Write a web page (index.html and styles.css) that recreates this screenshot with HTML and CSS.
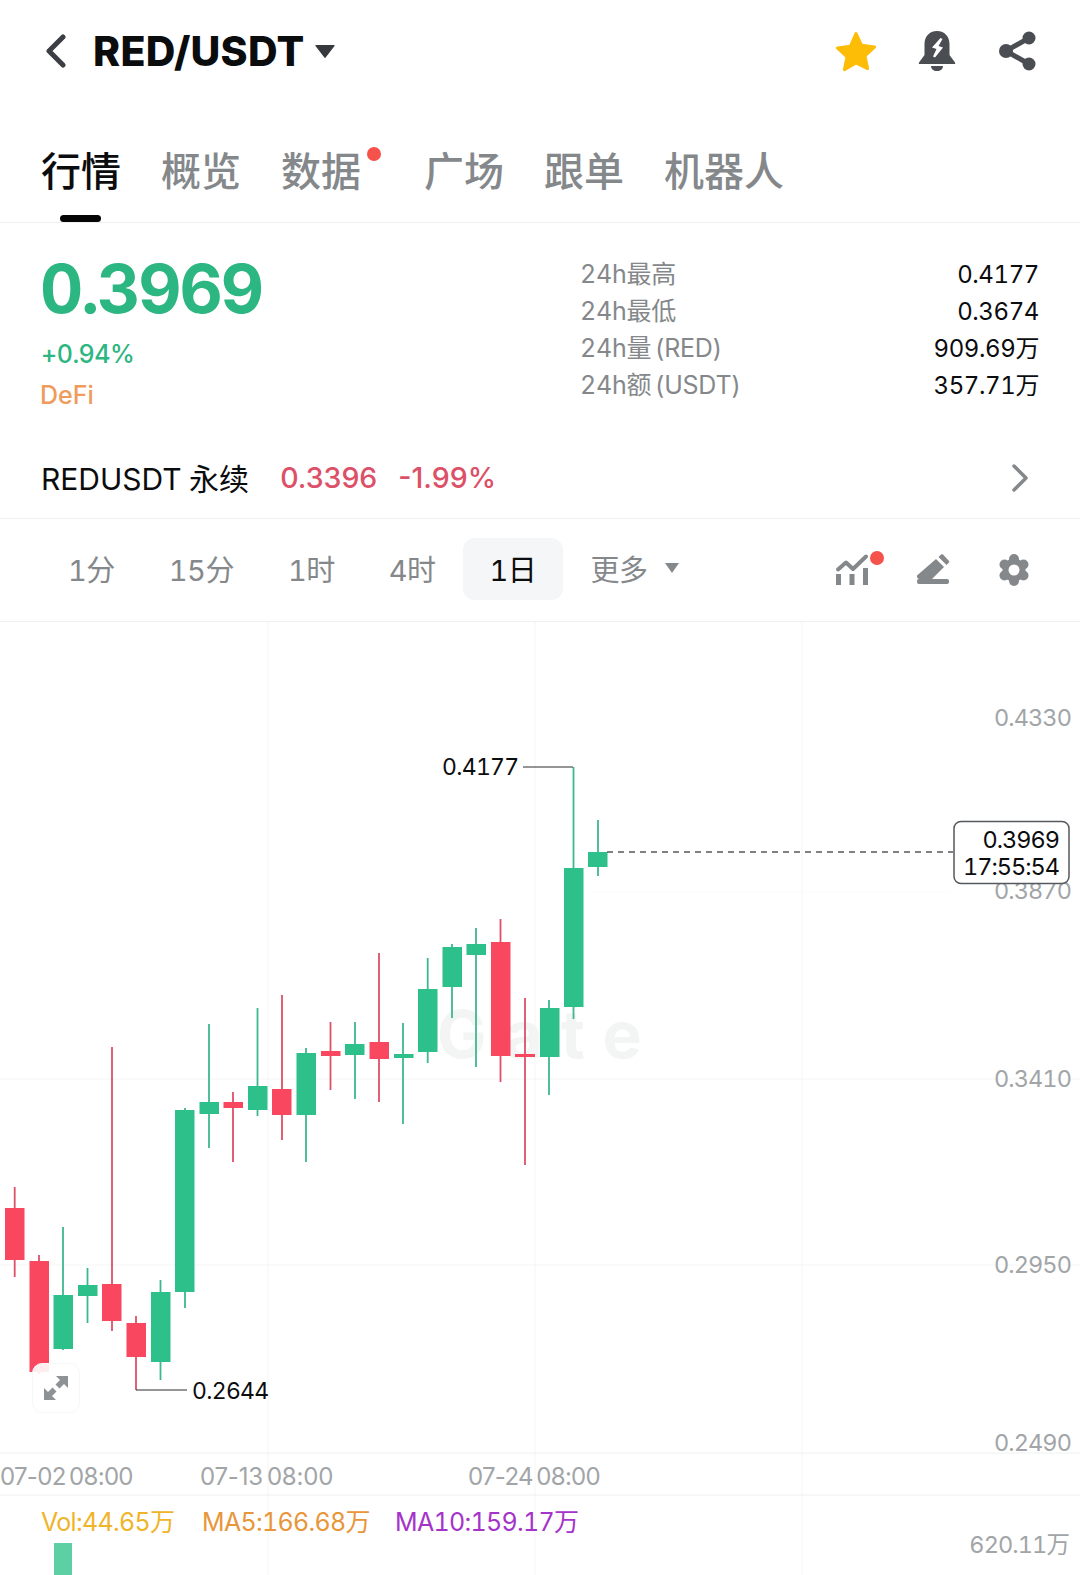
FILE: index.html
```html
<!DOCTYPE html>
<html lang="zh-CN">
<head>
    <meta charset="UTF-8">
    <title>RED/USDT</title>
    <meta name="viewport" content="width=device-width,initial-scale=1">
    <link rel="stylesheet" href="styles.css">
</head>
<body>
    <div class="header">
        <svg class="back" viewBox="0 0 22 34"><path d="M18 3L4 17l14 14"/></svg>
        <div class="pair">RED/USDT</div>
        <svg class="pair-caret" viewBox="0 0 20 14"><path d="M1.500 1.500h17l-8.500 11z"/></svg>
        <div class="header-icons">
            <svg viewBox="0 0 44 44"><path class="star" d="M22 4.500l5.600 11.800 13 1.600-9.600 8.900 2.600 12.800L22 33.900 10.400 40.600 13 27.800l-9.600-8.900 13-1.600z"/></svg>
            <svg viewBox="0 0 44 44">
                <path class="dark" d="M22 2c-8 0-12.500 6-12.500 13v11L4 33.500c-.6 1 0 1.500 1 1.500h34c1 0 1.600-.5 1-1.500L34.500 26V15C34.500 8 30 2 22 2z"/>
                <path class="dark" d="M16 37h12c0 3-2.500 5-6 5s-6-2-6-5z"/>
                <path class="bolt" d="M25.500 9l-8.500 9.500 4.500 1.500-3.500 7.500 2 1 8-10-4.500-1.500 4-7z"/>
            </svg>
            <svg viewBox="0 0 44 44">
                <path class="share-line" d="M33 9L10 22l23 13"/>
                <circle class="dark" cx="33" cy="9" r="6.500"/>
                <circle class="dark" cx="10" cy="22" r="7"/>
                <circle class="dark" cx="33" cy="35" r="6.500"/>
            </svg>
        </div>
    </div>

    <div class="tabs">
        <div class="tab active">行情</div>
        <div class="tab">概览</div>
        <div class="tab has-dot">数据</div>
        <div class="tab">广场</div>
        <div class="tab">跟单</div>
        <div class="tab">机器人</div>
    </div>

    <div class="quote">
        <div class="quote-left">
            <div class="price">0.3969</div>
            <div class="change">+0.94%</div>
            <div class="sector">DeFi</div>
        </div>
        <div class="stats">
            <div class="stat"><span>24h最高</span><b>0.4177</b></div>
            <div class="stat"><span>24h最低</span><b>0.3674</b></div>
            <div class="stat"><span>24h量 (RED)</span><b>909.69万</b></div>
            <div class="stat"><span>24h额 (USDT)</span><b>357.71万</b></div>
        </div>
    </div>

    <div class="perp">
        <span class="perp-name">REDUSDT 永续</span>
        <span class="perp-price">0.3396</span>
        <span class="perp-pct">-1.99%</span>
        <svg class="perp-arrow" viewBox="0 0 16 28"><path d="M2 2l12 12L2 26"/></svg>
    </div>

    <div class="intervals">
        <div class="interval">1分</div>
        <div class="interval">15分</div>
        <div class="interval">1时</div>
        <div class="interval">4时</div>
        <div class="interval active">1日</div>
        <div class="interval">更多<svg class="more-caret" viewBox="0 0 14 10"><path d="M0 0h14L7 10z"/></svg></div>
        <div class="tools">
            <svg viewBox="0 0 32 32">
                <path class="tool-line" d="M2 15.500l8-7 7 6.500L30 2.500"/>
                <path class="tool-bar" d="M2.500 20v11M16 20v11M29.500 14v17"/>
                <circle class="red-dot" cx="41" cy="4" r="7"/>
            </svg>
            <svg viewBox="0 0 32 32">
                <path class="tool" d="M0 21.500L19 5l8 8L15 25H2.500C1 25 0 24 0 22.500z"/>
                <path class="tool" d="M24 .5L21.500 3l8 8L32 8.500c.5-.5.5-1 0-1.500L26 .5c-.5-.5-1.500-.5-2 0z"/>
                <rect class="tool" x="0" y="25" width="32" height="5" rx="2"/>
            </svg>
            <svg viewBox="0 0 32 32">
                <circle class="tool" cx="16" cy="16" r="11.500"/>
                <circle class="tool" cx="16" cy="5" r="5"/>
                <circle class="tool" cx="16" cy="27" r="5"/>
                <circle class="tool" cx="6.500" cy="10.500" r="5"/>
                <circle class="tool" cx="25.500" cy="10.500" r="5"/>
                <circle class="tool" cx="6.500" cy="21.500" r="5"/>
                <circle class="tool" cx="25.500" cy="21.500" r="5"/>
                <circle class="hole" cx="16" cy="16" r="5.500"/>
            </svg>
        </div>
    </div>

    <div class="chart">
        <!-- viewBox starts at 622 so the numbers below are page y values -->
        <svg class="plot" viewBox="0 622 1080 953">
            <g class="grid">
                <path d="M268 622V1575M535 622V1575M802 622V1575"/>
                <path d="M0 1079H1080M0 1265H1080"/>
                <path class="grid-faint" d="M590 892H950"/>
                <path class="grid-dark" d="M0 1453H1080M0 1495H1080"/>
            </g>
            <text class="watermark" x="437" y="1058">Gate</text>

            <g class="dn"><line x1="14.700" y1="1187" x2="14.700" y2="1277"/><rect x="5" y="1208" width="19.500" height="52"/></g>
            <g class="dn"><line x1="39" y1="1255" x2="39" y2="1374"/><rect x="29.500" y="1261" width="19.500" height="111"/></g>
            <g class="up"><line x1="63" y1="1227" x2="63" y2="1350"/><rect x="53.500" y="1295" width="19.500" height="54"/></g>
            <g class="up"><line x1="87.500" y1="1268" x2="87.500" y2="1323"/><rect x="78" y="1285" width="19.500" height="11"/></g>
            <g class="dn"><line x1="112" y1="1047" x2="112" y2="1331"/><rect x="102" y="1284" width="19.500" height="37"/></g>
            <g class="dn"><line x1="136" y1="1316" x2="136" y2="1390"/><rect x="126.500" y="1323" width="19.500" height="34"/></g>
            <g class="up"><line x1="160.500" y1="1280" x2="160.500" y2="1380"/><rect x="151" y="1292" width="19.500" height="70"/></g>
            <g class="up"><line x1="185" y1="1108" x2="185" y2="1308"/><rect x="175" y="1110" width="19.500" height="182"/></g>
            <g class="up"><line x1="209" y1="1024" x2="209" y2="1148"/><rect x="199.500" y="1102" width="19.500" height="12"/></g>
            <g class="dn"><line x1="233" y1="1092" x2="233" y2="1162"/><rect x="223.500" y="1102" width="19.500" height="6"/></g>
            <g class="up"><line x1="257.500" y1="1008" x2="257.500" y2="1116"/><rect x="248" y="1086" width="19.500" height="24"/></g>
            <g class="dn"><line x1="282" y1="995" x2="282" y2="1140"/><rect x="272" y="1089" width="19.500" height="26"/></g>
            <g class="up"><line x1="306" y1="1048" x2="306" y2="1162"/><rect x="296.500" y="1053" width="19.500" height="62"/></g>
            <g class="dn"><line x1="330.500" y1="1022" x2="330.500" y2="1090"/><rect x="321" y="1051" width="19.500" height="5"/></g>
            <g class="up"><line x1="355" y1="1022" x2="355" y2="1099"/><rect x="345" y="1044" width="19.500" height="11"/></g>
            <g class="dn"><line x1="379" y1="953" x2="379" y2="1102"/><rect x="369.500" y="1042" width="19.500" height="17"/></g>
            <g class="up"><line x1="403" y1="1023" x2="403" y2="1124"/><rect x="394" y="1054" width="19.500" height="4"/></g>
            <g class="up"><line x1="427.700" y1="958" x2="427.700" y2="1063"/><rect x="418" y="989" width="19.500" height="63"/></g>
            <g class="up"><line x1="452" y1="944" x2="452" y2="1018"/><rect x="442.500" y="947" width="19.500" height="40"/></g>
            <g class="up"><line x1="476" y1="928" x2="476" y2="1067"/><rect x="466.500" y="944" width="19.500" height="11"/></g>
            <g class="dn"><line x1="500.500" y1="919" x2="500.500" y2="1082"/><rect x="491" y="942" width="19.500" height="114"/></g>
            <g class="dn"><line x1="525" y1="998" x2="525" y2="1165"/><rect x="515" y="1054" width="20" height="3"/></g>
            <g class="up"><line x1="549" y1="1000" x2="549" y2="1095"/><rect x="540" y="1008" width="19.500" height="49"/></g>
            <g class="up"><line x1="573.500" y1="767" x2="573.500" y2="1019"/><rect x="564" y="868" width="19.500" height="139"/></g>
            <g class="up"><line x1="598" y1="820" x2="598" y2="876"/><rect x="588" y="852" width="19.500" height="15"/></g>

            <path class="leader" d="M523 767H573M136 1390H187"/>
            <text class="mark" x="442" y="775">0.4177</text>
            <text class="mark" x="192" y="1399">0.2644</text>
            <path class="last-line" d="M607 852H953"/>

            <g class="axis">
                <text x="1071" y="726">0.4330</text>
                <text x="1071" y="899">0.3870</text>
                <text x="1071" y="1087">0.3410</text>
                <text x="1071" y="1273">0.2950</text>
                <text x="1071" y="1451">0.2490</text>
                <text x="1069" y="1553">620.11万</text>
            </g>

            <rect class="tag" x="954" y="821.500" width="115" height="62" rx="7"/>
            <text class="tag-text" x="1059" y="848">0.3969</text>
            <text class="tag-text" x="1059" y="875">17:55:54</text>

            <g class="times">
                <text x="0" y="1485">07-02 08:00</text>
                <text class="wide" x="200" y="1485">07-13 08:00</text>
                <text x="468" y="1485">07-24 08:00</text>
            </g>

            <text class="legend vol" x="41" y="1531">Vol:44.65万</text>
            <text class="legend ma5" x="202" y="1531">MA5:166.68万</text>
            <text class="legend ma10" x="395" y="1531">MA10:159.17万</text>
            <rect class="vol-bar" x="54" y="1543" width="18" height="32"/>
        </svg>
        <div class="expand">
            <svg viewBox="0 0 24 24"><path d="M12 0h12v12l-4-4-4.500 4.500-4-4L16 4zM0 24V12l4 4 4.500-4.500 4 4L8 20l4 4z"/></svg>
        </div>
    </div>
</body>
</html>
```
FILE: styles.css
```css
html,body{
    margin:0;
    padding:0;
    background:#fff;
}
body{
    width:1080px;
    height:1575px;
    overflow:hidden;
    font-family:Inter,"Noto Sans CJK SC",sans-serif;
    font-variant-numeric:tabular-nums;
    color:#0b0c0e;
}
.header{
    display:flex;
    align-items:center;
    height:102px;
    padding:0 40px 0 45px;
}
.back{
    width:22px;
    height:34px;
    margin-right:26px;
}
.back path{
    fill:none;
    stroke:#3b3e42;
    stroke-width:5;
    stroke-linecap:round;
    stroke-linejoin:round;
}
.pair{
    font-size:41px;
    font-weight:800;
    letter-spacing:.25px;
}
.pair-caret{
    width:22px;
    height:15px;
    margin-left:10px;
}
.pair-caret path{
    fill:#36393d;
    stroke:#36393d;
    stroke-width:1;
    stroke-linejoin:round;
}
.header-icons{
    display:flex;
    gap:37px;
    margin-left:auto;
}
.header-icons svg{
    width:44px;
    height:44px;
}
.star{
    fill:#fdbc05;
    stroke:#fdbc05;
    stroke-width:3;
    stroke-linejoin:round;
}
.dark{
    fill:#4a4d52;
}
.bolt{
    fill:#fff;
}
.share-line{
    fill:none;
    stroke:#4a4d52;
    stroke-width:5;
}

.tabs{
    display:flex;
    gap:40px;
    height:121px;
    padding-left:41px;
    box-sizing:border-box;
    border-bottom:1px solid #eff0f1;
    font-size:40px;
    font-weight:500;
    color:#85888b;
}
.tab{
    position:relative;
    line-height:140px;
    height:120px;
}
.tab.active{
    color:#0b0c0e;
}
.tab.active:after{
    content:"";
    position:absolute;
    left:19px;
    bottom:0;
    width:41px;
    height:7px;
    border-radius:4px;
    background:#050505;
}
.tab.has-dot{
    margin-right:23px;
}
.tab.has-dot:after{
    content:"";
    position:absolute;
    right:-20px;
    top:45px;
    width:14px;
    height:14px;
    border-radius:50%;
    background:#f4524a;
}

.quote{
    display:flex;
    justify-content:space-between;
    height:216px;
    padding:0 41px;
    box-sizing:border-box;
}
.price{
    margin:31px 0 0 -1px;
    line-height:70px;
    font-size:67px;
    font-weight:700;
    letter-spacing:-2.100px;
    color:#2cb681;
}
.change{
    margin-top:13px;
    line-height:34px;
    font-size:25px;
    font-weight:500;
    letter-spacing:-.5px;
    color:#2cb681;
}
.sector{
    margin:7px 0 0 -1px;
    line-height:34px;
    font-size:25px;
    font-weight:500;
    color:#ee9b5c;
}
.stats{
    width:459px;
    padding-top:33px;
}
.stat{
    display:flex;
    justify-content:space-between;
    align-items:baseline;
    line-height:37px;
    font-size:25px;
    letter-spacing:-.25px;
    word-spacing:-3px;
}
.stat span{
    color:#85888b;
}
.stat b{
    font-size:24px;
    font-weight:400;
    letter-spacing:-.4px;
    color:#0b0c0e;
}

.perp{
    display:flex;
    align-items:center;
    height:76px;
    padding:0 52px 3px 41px;
    border-bottom:1px solid #eff0f1;
    font-size:28.500px;
    font-variant-numeric:normal;
}
.perp-name{
    margin-right:31px;
    font-size:30px;
    word-spacing:-1px;
}
.perp-price,.perp-pct{
    color:#dc5068;
    font-weight:500;
}
.perp-pct{
    margin-left:21px;
}
.perp-arrow{
    width:16px;
    height:28px;
    margin:2px 0 0 auto;
}
.perp-arrow path{
    fill:none;
    stroke:#85888b;
    stroke-width:3.500;
    stroke-linecap:round;
    stroke-linejoin:round;
}

.intervals{
    display:flex;
    align-items:center;
    height:100px;
    padding:0 50px 2px 41px;
    border-bottom:1px solid #eff0f1;
    font-size:29px;
    color:#85888b;
}
.interval{
    display:flex;
    align-items:center;
    height:62px;
    padding:0 27px 2px;
    box-sizing:border-box;
    border-radius:12px;
    letter-spacing:-.5px;
}
.interval.active{
    background:#f4f6f7;
    color:#0b0c0e;
}
.more-caret{
    width:14px;
    height:10px;
    margin-left:18px;
}
.more-caret path{
    fill:#85888b;
}
.tools{
    display:flex;
    gap:49px;
    margin:2px 0 0 auto;
}
.tools svg{
    width:32px;
    height:32px;
    overflow:visible;
}
.tool{
    fill:#85888b;
}
.hole{
    fill:#fff;
}
.tool-line{
    fill:none;
    stroke:#85888b;
    stroke-width:4;
    stroke-linecap:round;
    stroke-linejoin:round;
}
.tool-bar{
    fill:none;
    stroke:#85888b;
    stroke-width:5;
}
.red-dot{
    fill:#f4524a;
}

.chart{
    position:relative;
    height:953px;
}
.plot{
    position:absolute;
    left:0;
    top:0;
    width:1080px;
    height:953px;
}
.grid path{
    fill:none;
    stroke:#f4f5f6;
    stroke-width:1;
}
.grid .grid-dark{
    stroke:#eff0f1;
}
.grid .grid-faint{
    stroke:#fafbfb;
}
.watermark{
    font-size:66px;
    font-weight:700;
    letter-spacing:18px;
    fill:#f3f5f5;
}
.up rect{
    fill:#2ec08a;
}
.up line{
    stroke:#3db88e;
    stroke-width:1.800;
}
.dn rect{
    fill:#f9475f;
}
.dn line{
    stroke:#dc5068;
    stroke-width:1.800;
}
.leader{
    fill:none;
    stroke:#2a2c2f;
    stroke-width:1;
}
.mark{
    font-size:23px;
    letter-spacing:-.7px;
    fill:#0b0c0e;
}
.last-line{
    fill:none;
    stroke:#55585c;
    stroke-width:1.500;
    stroke-dasharray:6 5;
}
.axis text{
    font-size:23.500px;
    letter-spacing:-.9px;
    fill:#a2a5a7;
    text-anchor:end;
}
.tag{
    fill:#fff;
    stroke:#55585c;
    stroke-width:1.500;
}
.tag-text{
    font-size:23.500px;
    letter-spacing:-1px;
    fill:#0b0c0e;
    text-anchor:end;
}
.times text{
    font-size:24px;
    font-variant-numeric:normal;
    letter-spacing:-.7px;
    word-spacing:-2.500px;
    fill:#a2a5a7;
}
.times .wide{
    letter-spacing:-.2px;
}
.legend{
    font-size:25px;
    letter-spacing:-.7px;
}
.vol{
    fill:#f0b429;
}
.ma5{
    fill:#e8963a;
}
.ma10{
    fill:#a633c9;
}
.vol-bar{
    fill:#5ccfa4;
}
.expand{
    position:absolute;
    left:32px;
    top:741px;
    width:48px;
    height:50px;
    display:flex;
    align-items:center;
    justify-content:center;
    box-sizing:border-box;
    border:1px solid #f6f7f7;
    border-radius:10px;
    background:rgba(255,255,255,.9);
}
.expand svg{
    width:24px;
    height:24px;
}
.expand path{
    fill:#8f9295;
}
```
